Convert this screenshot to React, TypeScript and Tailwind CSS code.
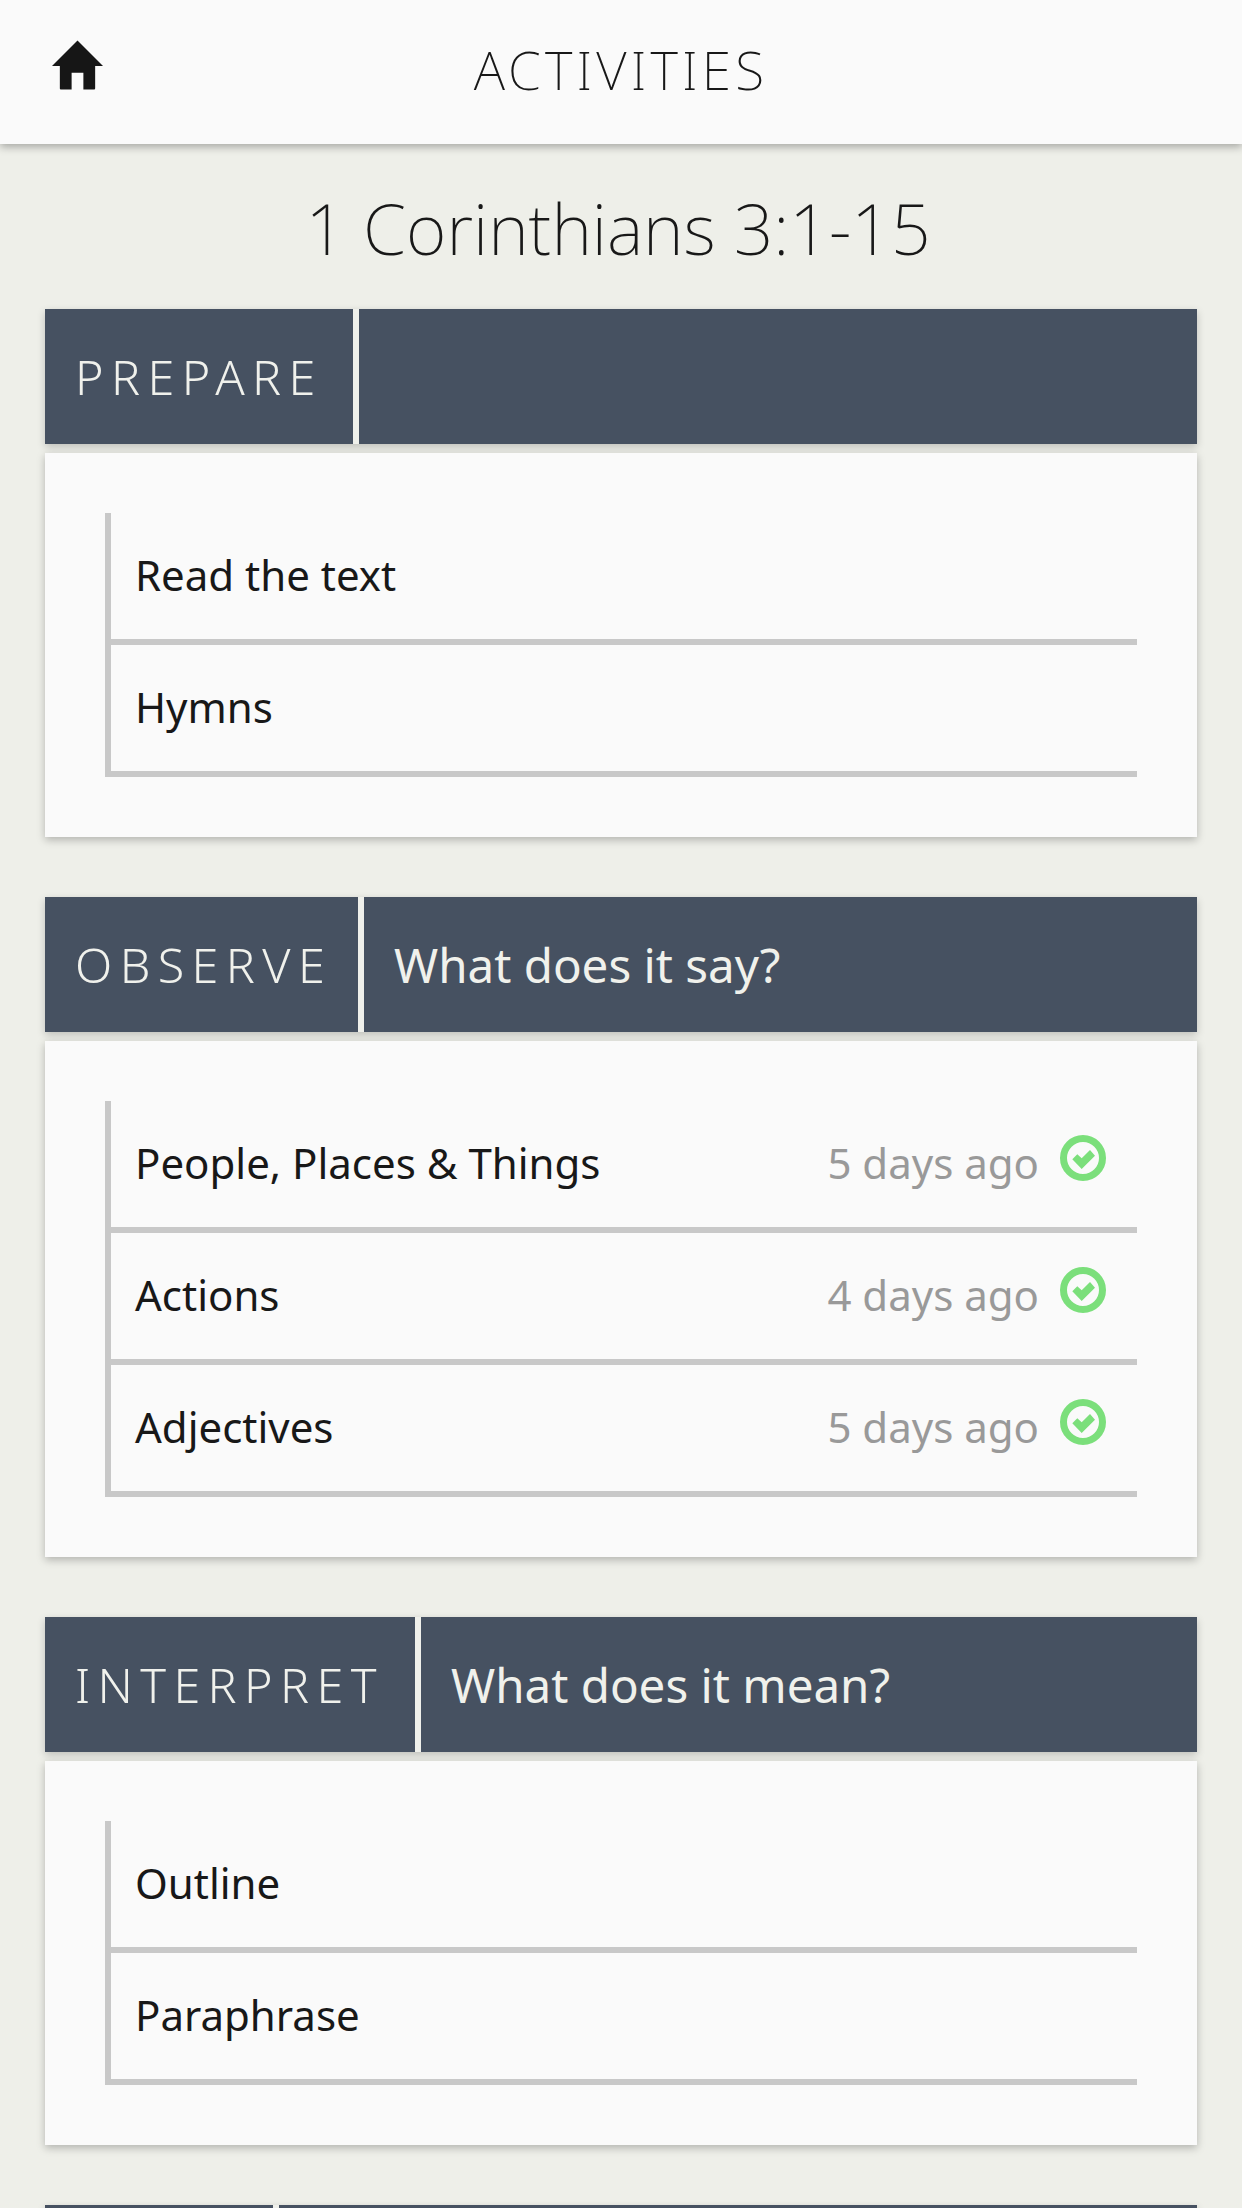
import React from "react";

const font = { fontFamily: '"Noto Sans", sans-serif' };

function Check() {
  return (
    <svg width="48" height="48" viewBox="0 0 48 48" className="shrink-0 mt-[-8px]">
      <circle cx="24" cy="24" r="19.5" fill="none" stroke="#7bdf7b" strokeWidth="7" />
      <path d="M13.3 25.3 L18.3 20.3 L22.7 24.3 L31 16 L36 21.7 L22.7 35 Z" fill="#7bdf7b" />
    </svg>
  );
}

function Home() {
  return (
    <svg width="51" height="50" viewBox="0 0 52 50">
      <path d="M26 0 L52 26 L44 26 L44 49 Q44 50 43 50 L32 50 L32 33 L20 33 L20 50 L9 50 Q8 50 8 49 L8 26 L0 26 Z" fill="#161616" />
    </svg>
  );
}

type Item = { name: string; when?: string };

function Section({ label, sub, items, w }: { label?: string; sub?: string; items?: Item[]; w: string }) {
  return (
    <section className="mb-[60px]">
      <div className="flex h-[135px] bg-[#465161] shadow-[0_3px_8px_rgba(0,0,0,0.2)] text-[#f0f1ec]">
        <div className={`${w} flex items-center pl-[30px] text-[48.5px] font-light tracking-[7.4px] border-r-[6px] border-[#eff0eb] whitespace-nowrap`}>
          {label}
        </div>
        {sub && <div className="flex items-center pl-[30px] text-[47.5px] whitespace-nowrap">{sub}</div>}
      </div>
      {items && (
        <div className="mt-[9px] bg-[#fafafa] p-[60px] shadow-[0_3px_8px_rgba(0,0,0,0.25)]">
          <div className="border-l-[6px] border-[#c8c8c8]">
            {items.map((it) => (
              <div key={it.name} className="flex h-[132px] items-center border-b-[6px] border-[#c8c8c8] pb-[4px] pl-[24px] pr-[30px] text-[42px]">
                <span className="text-[#181818]">{it.name}</span>
                {it.when && (
                  <>
                    <span className="ml-auto mr-[20px] text-[#999999]">{it.when}</span>
                    <Check />
                  </>
                )}
              </div>
            ))}
          </div>
        </div>
      )}
    </section>
  );
}

export default function App() {
  return (
    <div className="h-[2208px] overflow-hidden bg-[#eeefe9]" style={font}>
      <header className="relative flex h-[144px] items-center justify-center bg-[#fafafa] shadow-[0_3px_8px_rgba(0,0,0,0.3)]">
        <div className="absolute left-[52px] top-[40px]"><Home /></div>
        <h1 className="mt-[-4px] text-[53px] font-extralight tracking-[4.2px] text-[#181818]">ACTIVITIES</h1>
      </header>
      <div className="flex h-[165px] items-center justify-center pt-[3px] pr-[6px] text-[69.5px] font-extralight text-[#181818]">
        1 Corinthians 3:1-15
      </div>
      <main className="px-[45px]">
        <Section label="PREPARE" w="w-[314px]" items={[{ name: "Read the text" }, { name: "Hymns" }]} />
        <Section label="OBSERVE" sub="What does it say?" w="w-[319px]" items={[
          { name: "People, Places & Things", when: "5 days ago" },
          { name: "Actions", when: "4 days ago" },
          { name: "Adjectives", when: "5 days ago" },
        ]} />
        <Section label="INTERPRET" sub="What does it mean?" w="w-[376px]" items={[{ name: "Outline" }, { name: "Paraphrase" }]} />
        <Section w="w-[234px]" />
      </main>
    </div>
  );
}
